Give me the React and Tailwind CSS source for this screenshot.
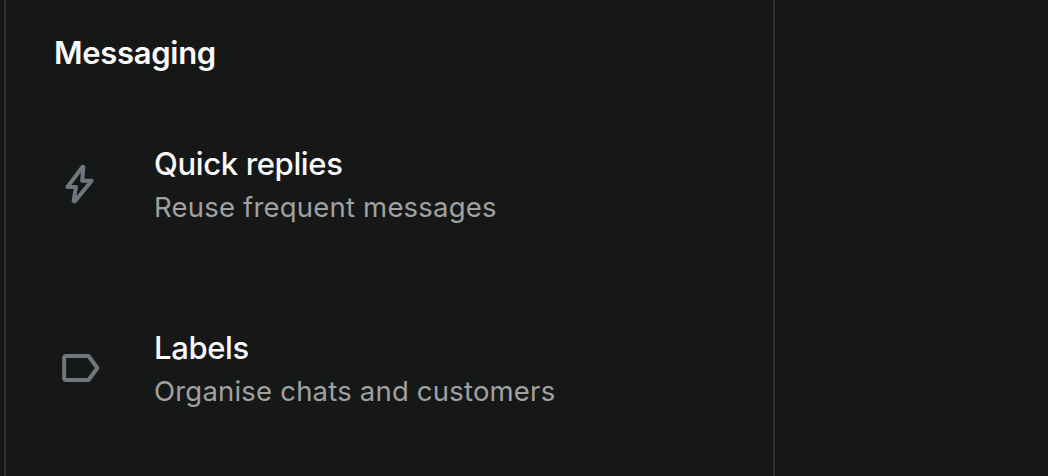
const items = [
  { icon: BoltIcon, title: 'Quick replies', description: 'Reuse frequent messages' },
  { icon: LabelIcon, title: 'Labels', description: 'Organise chats and customers' },
]

function BoltIcon() {
  return (
    <svg width="48" height="48" viewBox="0 0 48 48" fill="none" stroke="currentColor" strokeWidth="4" strokeLinejoin="round">
      <path d="M27.6 6.8 L12.4 27 H21 L18.6 41 L20 41.2 L36.6 20.8 H27.2 L28.4 7 Z" />
    </svg>
  )
}

function LabelIcon() {
  return (
    <svg width="48" height="48" viewBox="0 0 48 48" fill="none" stroke="currentColor" strokeWidth="4" strokeLinejoin="round">
      <path d="M11 12 H33.5 L42.4 24 L33.5 36 H11 Q9.2 36 9.2 34.2 V13.8 Q9.2 12 11 12 Z" />
    </svg>
  )
}

export default function App() {
  return (
    <div className="flex h-[476px] w-[1048px] overflow-hidden bg-[#161717] font-[Inter,sans-serif]">
      <div className="ml-1 w-[771px] border-x-2 border-[#2e2f2f] pl-[48px] pt-[32px]">
        <h2 className="h-[42px] text-[31px] leading-[42px] font-semibold tracking-[-0.3px] text-[#fafafa]">Messaging</h2>
        <div className="pt-[18px]">
          {items.map(({ icon: Icon, title, description }) => (
            <div key={title} className="flex h-[184px] items-center">
              <div className="w-[100px] pl-px text-[#6f777d]">
                <Icon />
              </div>
              <div className="pt-[5px]">
                <p className="text-[31px] leading-[42px] font-[450] tracking-[-0.35px] text-[#fafafa]">{title}</p>
                <p className="text-[27.5px] leading-[45px] tracking-[0.2px] text-[#a0a1a1]">{description}</p>
              </div>
            </div>
          ))}
        </div>
      </div>
    </div>
  )
}
